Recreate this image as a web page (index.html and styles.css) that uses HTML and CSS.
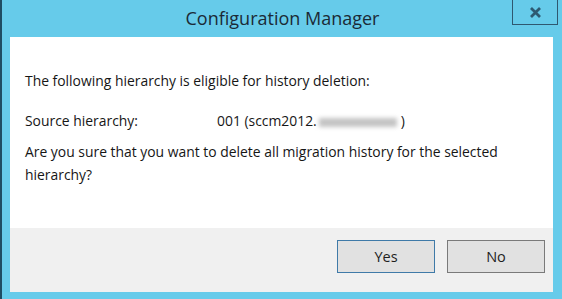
FILE: index.html
```html
<!DOCTYPE html>
<html>
<head>
<meta charset="utf-8">
<link rel="stylesheet" href="styles.css">
</head>
<body>
<div class="window">
  <div class="titlebar">
    <span class="title">Configuration Manager</span>
    <button class="close" aria-label="Close">
      <svg width="13" height="11" viewBox="0 0 13 11"><path d="M2 1 L11 10 M11 1 L2 10" stroke="#2d5a72" stroke-width="2.8" fill="none"/></svg>
    </button>
  </div>
  <div class="client">
    <div class="content">
      <p class="line first">The following hierarchy is eligible for history deletion:</p>
      <div class="row">
        <span class="label">Source hierarchy:</span>
        <span class="value">001 (sccm2012.<span class="blur"></span>)</span>
      </div>
      <p class="line question">Are you sure that you want to delete all migration history for the selected hierarchy?</p>
    </div>
    <div class="footer">
      <button class="btn default">Yes</button>
      <button class="btn">No</button>
    </div>
  </div>
</div>
</body>
</html>
```
FILE: styles.css
```css
html, body {
  margin: 0;
  padding: 0;
}
body {
  width: 562px;
  height: 299px;
  overflow: hidden;
  font-family: "Open Sans", "Noto Sans", sans-serif;
}
.window {
  box-sizing: border-box;
  width: 562px;
  height: 299px;
  background: #66cbea;
  border-left: 2px solid #1f4d63;
  display: flex;
  flex-direction: column;
  padding: 0 9px 7px 8px;
}
.titlebar {
  position: relative;
  height: 37px;
  flex: none;
  display: flex;
  align-items: center;
  justify-content: center;
}
.title {
  font-size: 18px;
  color: #1b2a36;
  margin-top: -2px;
  margin-left: 2px;
}
.close {
  position: absolute;
  right: -5px;
  top: -1px;
  width: 46px;
  height: 26px;
  box-sizing: border-box;
  border: 1px solid #2f5870;
  background: transparent;
  padding: 0;
  display: flex;
  align-items: center;
  justify-content: center;
}
.client {
  flex: 1;
  display: flex;
  flex-direction: column;
  background: #ffffff;
}
.content {
  flex: 1;
  padding: 0 15px;
  font-size: 13.9px;
  color: #161616;
}
.line {
  margin: 0;
  line-height: 23px;
}
.first {
  margin-top: 32px;
}
.row {
  display: flex;
  margin-top: 17px;
  line-height: 23px;
}
.label {
  width: 192px;
  flex: none;
}
.blur {
  display: inline-block;
  width: 78px;
  height: 9px;
  background: #c4c4c4;
  filter: blur(2px);
  vertical-align: middle;
  margin: 0 4px 0 2px;
}
.question {
  margin-top: 8px;
}
.footer {
  flex: none;
  height: 64px;
  background: #f0f0f0;
  display: flex;
  justify-content: flex-end;
  align-items: flex-start;
  padding: 12px 8px 0 0;
  box-sizing: border-box;
  gap: 12px;
}
.btn {
  width: 98px;
  height: 33px;
  box-sizing: border-box;
  background: #e1e1e1;
  border: 1px solid #7a7a7a;
  font-family: "Open Sans", "Noto Sans", sans-serif;
  font-size: 14.5px;
  color: #1e1e1e;
  padding: 0;
}
.btn.default {
  border-color: #3f7aa8;
}
```
